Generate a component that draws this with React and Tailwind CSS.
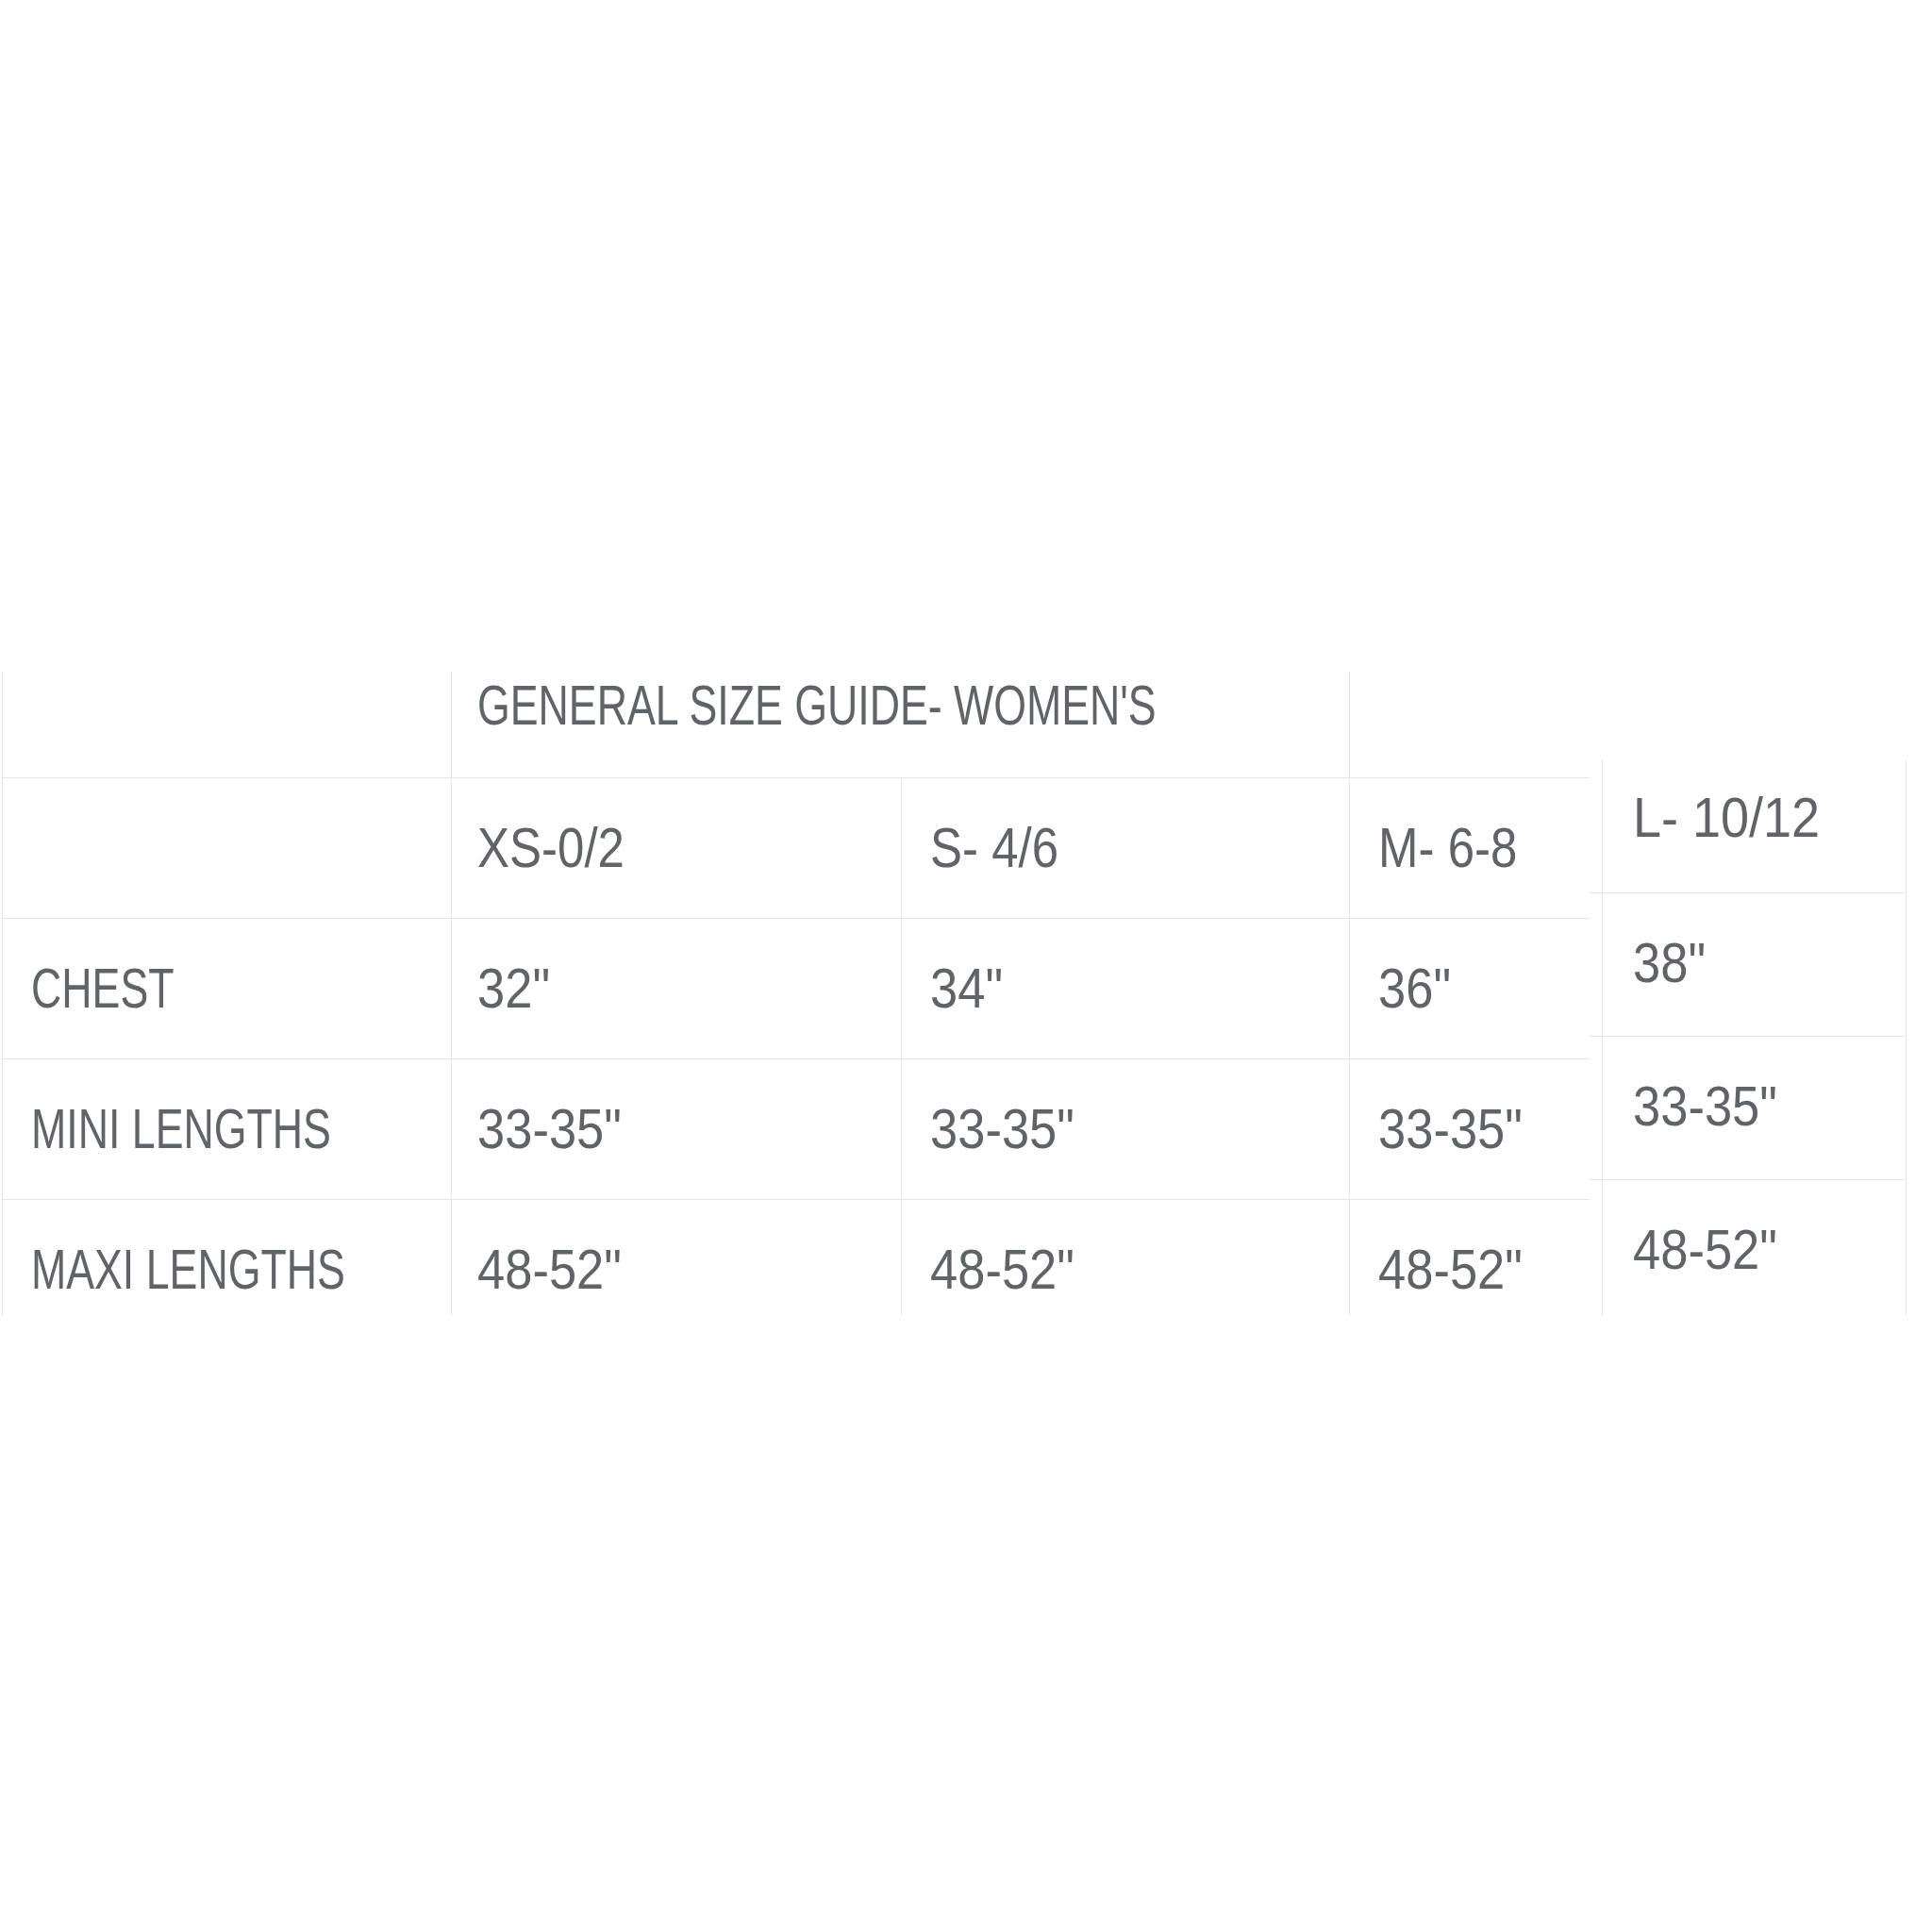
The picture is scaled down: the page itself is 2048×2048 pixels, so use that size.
import React from 'react';

const sizes = ['XS-0/2', 'S- 4/6', 'M- 6-8'];

const rows = [
  { label: 'CHEST', values: ['32"', '34"', '36"'] },
  { label: 'MINI LENGTHS', values: ['33-35"', '33-35"', '33-35"'] },
  { label: 'MAXI LENGTHS', values: ['48-52"', '48-52"', '48-52"'] },
];

const large = ['38"', '33-35"', '48-52"'];

const line = 'border-[#e4e6e7]';

// the original face is a condensed DIN-like font, so squeeze Liberation Sans
const Txt = ({ kind = 'word', children }) => {
  const squeeze =
    kind === 'word'
      ? 'scale-x-[0.745]'
      : kind === 'size'
      ? 'scale-x-[0.85]'
      : kind === 'wide'
      ? 'scale-x-[0.9]'
      : 'scale-x-[0.875]';
  return (
    <span className={`inline-block origin-left whitespace-nowrap ${squeeze}`}>
      {children}
    </span>
  );
};

const SizeGuide = () => {
  return (
    <div className="grid grid-cols-[476px_477px_475px_255px] w-[1683px]">
      {/* title row, cut off at the top */}
      <div className={`h-[112px] border-l ${line}`} />
      <div className={`col-span-2 h-[112px] border-l ${line} flex items-center pb-[40px] pl-[27px]`}>
        <Txt>GENERAL SIZE GUIDE- WOMEN'S</Txt>
      </div>
      <div className={`h-[112px] border-l ${line}`} />

      <div className={`h-[149px] border-l border-t ${line}`} />
      {sizes.map((size, j) => (
        <div
          key={size}
          className={`h-[149px] border-l border-t ${line} flex items-center ${j === 0 ? 'pl-[27px]' : 'pl-[30px]'}`}
        >
          <Txt kind="size">{size}</Txt>
        </div>
      ))}

      {rows.map((row, i) => {
        const last = i === rows.length - 1;
        const cell = last
          ? `h-[123px] border-l border-t ${line} flex items-start pt-[44px]`
          : `h-[149px] border-l border-t ${line} flex items-center`;
        return (
          <React.Fragment key={row.label}>
            <div className={`${cell} pl-[30px]`}>
              <Txt>{row.label}</Txt>
            </div>
            {row.values.map((v, j) => (
              <div key={j} className={`${cell} ${j === 0 ? 'pl-[27px]' : 'pl-[30px]'}`}>
                <Txt kind="num">{v}</Txt>
              </div>
            ))}
          </React.Fragment>
        );
      })}
    </div>
  );
};

const LargeColumn = () => {
  return (
    <div className="mt-[94px] w-[336px] flex flex-col">
      <div className="flex h-[140px]">
        <div className="w-[13px]" />
        <div className={`flex-1 border-l border-r ${line} flex items-start pt-[31px] pl-[32px]`}>
          <Txt kind="wide">L- 10/12</Txt>
        </div>
      </div>
      {large.map((v, i) => (
        <div
          key={i}
          className={`flex border-t ${line} ${i === large.length - 1 ? 'h-[144px]' : 'h-[152px]'}`}
        >
          <div className="w-[13px]" />
          <div className={`flex-1 border-l border-r ${line} flex items-start pt-[44px] pl-[32px]`}>
            <Txt kind="num">{v}</Txt>
          </div>
        </div>
      ))}
    </div>
  );
};

export default function App() {
  return (
    <div className="w-[2048px] h-[2048px] bg-white pt-[712px] pl-[2px] flex items-start font-['Liberation_Sans',sans-serif] text-[#606469] text-[60px] leading-none">
      <SizeGuide />
      <LargeColumn />
    </div>
  );
}
